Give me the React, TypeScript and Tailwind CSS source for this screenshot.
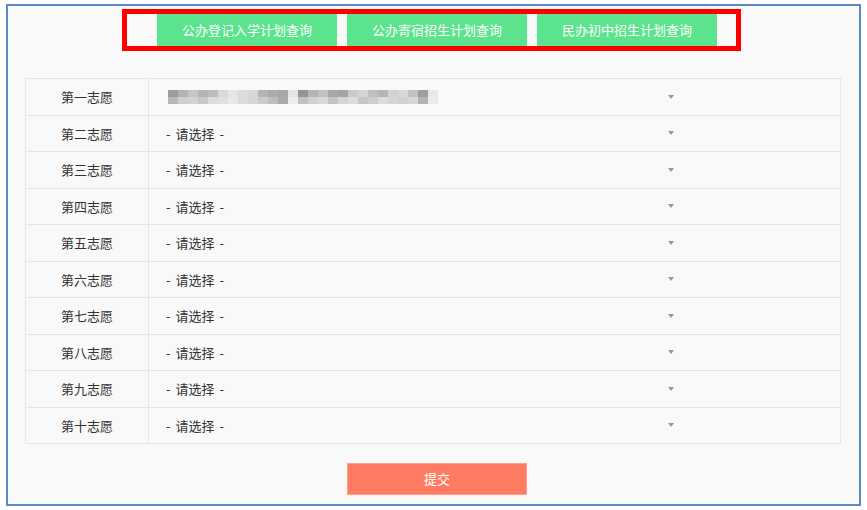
const labels = ['第一志愿', '第二志愿', '第三志愿', '第四志愿', '第五志愿', '第六志愿', '第七志愿', '第八志愿', '第九志愿', '第十志愿']

const links = ['公办登记入学计划查询', '公办寄宿招生计划查询', '民办初中招生计划查询']

// pixelated placeholder for the blurred-out first choice
const topShades = ['#9a9ea3', '#b4b4b6', '#c4c6c8', '#b2b5b8', '#bcbdbd', '#d6d9dc', '#e6e6e6', '#dcdcdc', '#d8d8d8', '#b5b5b7', '#a9abad', '#a6a7a9', '#e2e4e6', '#939597', '#b2b4b6', '#c2c2c3', '#a6a8aa', '#a2a5a8', '#c9cacc', '#d4d4d6', '#bfbfc1', '#b4b6b8', '#d0d2d4', '#d8d8d8', '#c2c2c0', '#9c9ea0', '#e8e8e8']
const bottomShades = ['#b4b9be', '#cdcfd1', '#d0d2d4', '#c6c8ca', '#dadcdd', '#e0e1e2', '#e8e8e8', '#dcdcdc', '#d6d6d6', '#c9cacb', '#bcbdbf', '#a9aaac', '#eceeef', '#c0c2c4', '#d0d1d3', '#d8d8d8', '#c4c4c5', '#d4d5d6', '#dcdcdc', '#c8c6c5', '#d1ccca', '#dcdde0', '#d4d6d8', '#d2d2d4', '#d6d6d6', '#b2b3b5', '#ececec']

function Blurred() {
  return (
    <div className="flex flex-col blur-[0.6px]">
      <div className="flex">
        {topShades.map((c, i) => (
          <div key={i} className="h-[7px] w-[10px]" style={{ backgroundColor: c }} />
        ))}
      </div>
      <div className="flex">
        {bottomShades.map((c, i) => (
          <div key={i} className="h-[7px] w-[10px]" style={{ backgroundColor: c }} />
        ))}
      </div>
    </div>
  )
}

export default function App() {
  return (
    <div
      className="h-[510px] w-[867px] bg-white pl-[6px] pt-[4px] text-[13px] text-[#333]"
      style={{ fontFamily: '"Noto Sans CJK SC", "Noto Sans", sans-serif' }}
    >
      <div className="flex h-[502px] w-[855px] flex-col border-2 border-[#5b8ac6] bg-[#f9f9f9]">
        <div className="pl-[149px] pt-[8px]">
          <div className="relative flex w-fit gap-[10px]">
            {links.map((t) => (
              <button key={t} className="h-[32px] w-[180px] bg-[#5ce38d] text-[13px] text-white">
                {t}
              </button>
            ))}
            <div className="pointer-events-none absolute -bottom-[5px] -left-[35px] -right-[24px] -top-[5px] border-[5px] border-[#ff0000]" />
          </div>
        </div>

        <div className="ml-[17px] mt-[32px] w-[816px] border-l border-t border-[#e6e6e6]">
          {labels.map((l, i) => (
            <div key={l} className="flex h-[36.5px] border-b border-[#e6e6e6]">
              <div className="flex w-[123px] items-center justify-center border-r border-[#e6e6e6]">{l}</div>
              <div className="flex flex-1 items-center border-r border-[#e6e6e6]">
                <div className="flex w-[530px] items-center justify-between pl-[17px] pr-[5px]">
                  {i === 0 ? (
                    <div className="pl-[2px]">
                      <Blurred />
                    </div>
                  ) : (
                    <span className="flex">
                      <span>-</span>
                      <span className="mx-[5px]">请选择</span>
                      <span>-</span>
                    </span>
                  )}
                  <span className="h-0 w-0 border-x-[3.5px] border-t-[4px] border-x-transparent border-t-[#999]" />
                </div>
              </div>
            </div>
          ))}
        </div>

        <div className="pl-[339px] pt-[19px]">
          <button className="h-[32px] w-[180px] border border-[#ffa08a] bg-[#ff7c62] text-[13px] text-white">提交</button>
        </div>
      </div>
    </div>
  )
}
